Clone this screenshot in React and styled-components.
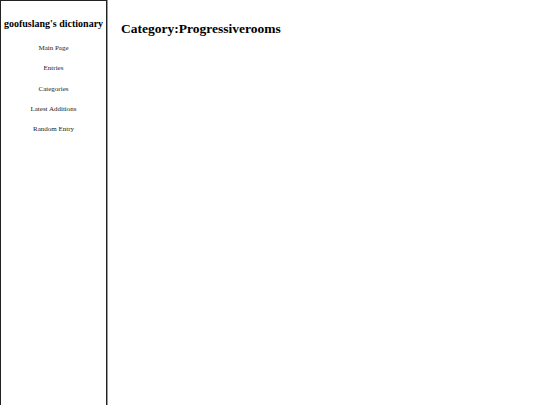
import styled, { createGlobalStyle } from "styled-components";

const GlobalStyle = createGlobalStyle`
  html, body {
    margin: 0;
    padding: 0;
    background: #fff;
    font-family: "Liberation Serif", "Times New Roman", serif;
    color: #000;
  }
`;

const Layout = styled.div`
  display: flex;
  min-height: 405px;
`;

const Sidebar = styled.nav`
  width: 105px;
  flex-shrink: 0;
  border: 1px solid #222;
  border-bottom: none;
  box-shadow: 1px 0 0 #999;
  text-align: center;
`;

const SiteTitle = styled.h2`
  margin: 17px 0 14px;
  font-size: 10px;
  line-height: 12px;
  font-weight: bold;
  white-space: nowrap;
`;

const NavList = styled.ul`
  list-style: none;
  margin: 0;
  padding: 0;
  display: flex;
  flex-direction: column;
  gap: 12px;
`;

const NavItem = styled.li`
  font-size: 7px;
  line-height: 8.3px;
`;

const NavLink = styled.a`
  color: #222;
  text-decoration: none;
`;

const Content = styled.main`
  flex: 1;
  padding: 21px 14px;
`;

const Heading = styled.h1`
  margin: 0;
  font-size: 13.5px;
  line-height: 16px;
  font-weight: bold;
`;

const links = ["Main Page", "Entries", "Categories", "Latest Additions", "Random Entry"];

export default function App() {
  return (
    <>
      <GlobalStyle />
      <Layout>
        <Sidebar>
          <SiteTitle>goofuslang's dictionary</SiteTitle>
          <NavList>
            {links.map((l) => (
              <NavItem key={l}>
                <NavLink href="#">{l}</NavLink>
              </NavItem>
            ))}
          </NavList>
        </Sidebar>
        <Content>
          <Heading>Category:Progressiverooms</Heading>
        </Content>
      </Layout>
    </>
  );
}
